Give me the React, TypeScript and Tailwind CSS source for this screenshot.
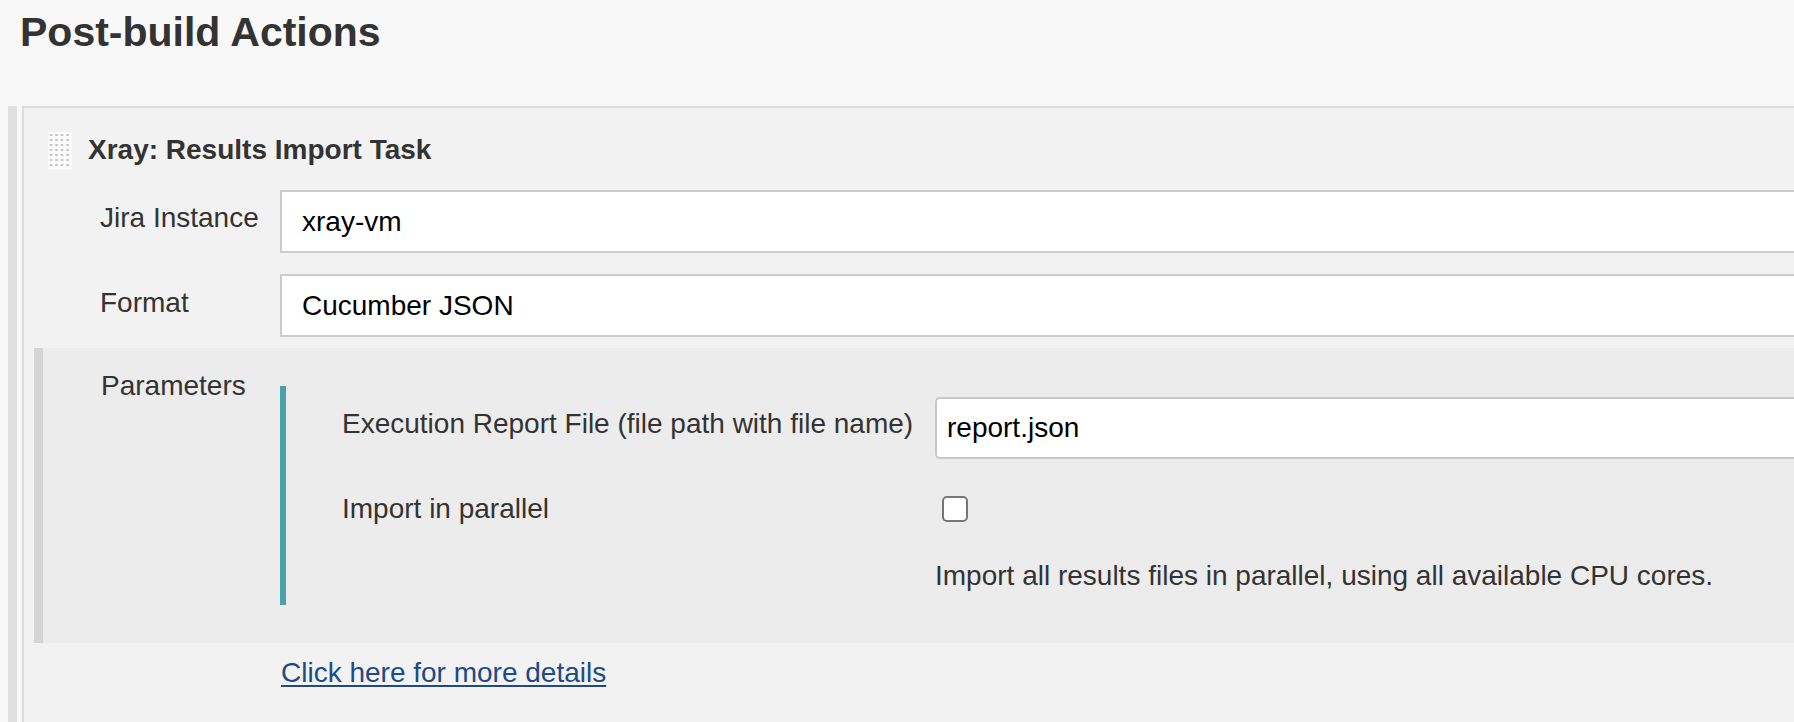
import React from "react";

function GripIcon() {
  const cols = [3, 8.5, 14, 19.5];
  const rows = [3, 8, 13, 18, 23, 28, 33];
  return (
    <svg width="24" height="37" viewBox="0 0 24 37" className="shrink-0">
      <rect width="24" height="37" fill="#fbfbfb" />
      {rows.map((y) =>
        cols.map((x) => <rect key={`${x}-${y}`} x={x - 1.25} y={y - 1} width="2.5" height="2" fill="#c4c4c4" />)
      )}
    </svg>
  );
}

function FieldRow({ label, value, labelPad }: { label: string; value: string; labelPad: string }) {
  return (
    <div className="flex">
      <div className={`w-[256px] shrink-0 pl-[76px] text-[28px] leading-[32px] text-[#333] ${labelPad}`}>{label}</div>
      <div className="flex h-[63px] flex-1 items-center border-2 border-r-0 border-[#cccccc] bg-white pl-[20px] text-[28px] leading-[32px] text-black">
        {value}
      </div>
    </div>
  );
}

export default function App() {
  return (
    <div className="flex h-[722px] w-full flex-col overflow-hidden bg-[#f8f8f8] font-['Liberation_Sans',Arial,sans-serif] text-[#333]">
      <h2 className="pl-[20px] pt-[9px] text-[41px] font-bold leading-[47px] text-[#333]">Post-build Actions</h2>

      <div className="mt-[50px] flex flex-1">
        <div className="ml-[8px] w-[9px] shrink-0 bg-[#e0e0e0]" />
        <div className="ml-[5px] flex-1 border-l-2 border-t-2 border-[#dcdcdc] bg-[#f2f2f2]">
          {/* header */}
          <div className="mt-[24px] flex items-start pl-[24px]">
            <GripIcon />
            <div className="ml-[16px] mt-[2px] text-[28px] font-bold leading-[32px] text-[#333]">
              Xray: Results Import Task
            </div>
          </div>

          <div className="mt-[21px]">
            <FieldRow label="Jira Instance" value="xray-vm" labelPad="pt-[12px]" />
          </div>
          <div className="mt-[21px]">
            <FieldRow label="Format" value="Cucumber JSON" labelPad="pt-[13px]" />
          </div>

          {/* parameters block */}
          <div className="ml-[10px] mt-[11px] flex h-[295px] bg-[#ececec]">
            <div className="w-[9px] shrink-0 bg-[#d5d5d5]" />
            <div className="w-[237px] shrink-0 pl-[58px] pt-[22px] text-[28px] leading-[32px] text-[#333]">Parameters</div>
            <div className="mt-[38px] h-[219px] flex-1 border-l-[6px] border-[#4aa1a9]">
              <div className="flex pt-[11px]">
                <div className="w-[649px] shrink-0 pl-[56px] pt-[11px] text-[28px] leading-[32px] text-[#333]">
                  Execution Report File (file path with file name)
                </div>
                <div className="flex h-[62px] flex-1 items-center rounded-l-[5px] border-2 border-r-0 border-[#c8c8c8] bg-white pl-[10px] text-[28px] leading-[32px] text-black">
                  report.json
                </div>
              </div>
              <div className="mt-[34px] flex">
                <div className="w-[649px] shrink-0 pl-[56px] text-[28px] leading-[32px] text-[#333]">Import in parallel</div>
                <div className="ml-[7px] mt-[3px] h-[26px] w-[26px] rounded-[5px] border-2 border-[#767676] bg-white" />
              </div>
              <div className="mt-[35px] pl-[649px] text-[28px] leading-[32px] text-[#333]">
                Import all results files in parallel, using all available CPU cores.
              </div>
            </div>
          </div>

          <div className="mt-[14px] pl-[257px] text-[28px] leading-[32px]">
            <a href="#" className="text-[#204a87] underline decoration-2 underline-offset-[3px]">
              Click here for more details
            </a>
          </div>
        </div>
      </div>
    </div>
  );
}
